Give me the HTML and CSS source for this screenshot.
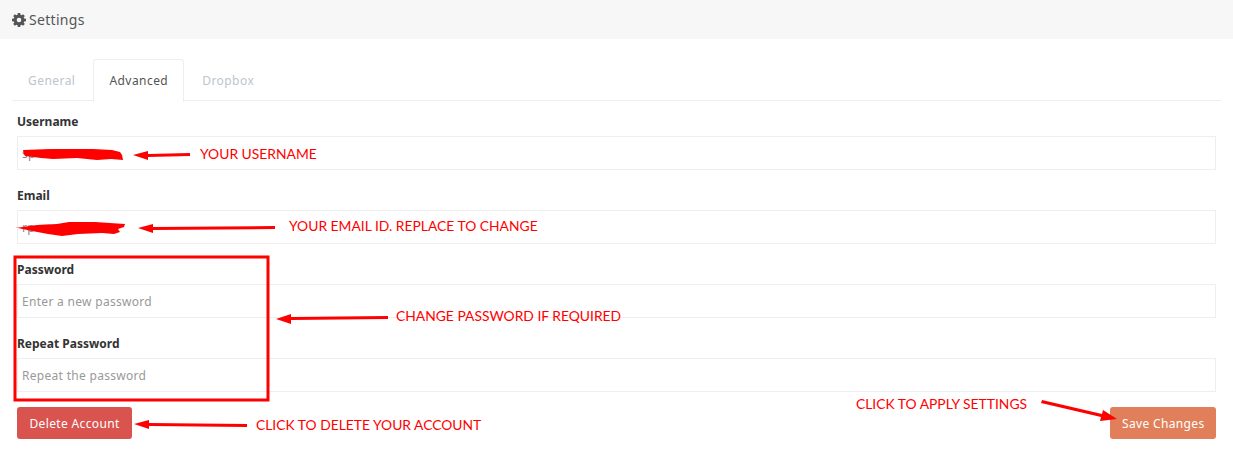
FILE: index.html
```html
<!DOCTYPE html>
<html lang="en">
<head>
  <meta charset="UTF-8">
  <meta name="viewport" content="width=device-width, initial-scale=1.0">
  <title>Settings</title>
  <link rel="stylesheet" href="styles.css">
</head>
<body>
  <div class="page-head">
    <svg class="gear" viewBox="0 0 14 14" width="14" height="14">
      <path fill="#555" fill-rule="evenodd" d="M5.8 0h2.400l.3 1.800 1.100.5 1.500-1.100 1.700 1.700-1.100 1.500.5 1.100 1.800.3v2.400l-1.800.3-.5 1.100 1.100 1.500-1.700 1.700-1.500-1.100-1.100.5-.3 1.800H5.800l-.3-1.800-1.100-.5-1.500 1.100-1.700-1.700 1.100-1.500-.5-1.100L0 8.200V5.800l1.800-.3.5-1.100-1.100-1.500 1.700-1.700 1.500 1.100 1.100-.5zM7 4.700a2.300 2.300 0 1 0 0 4.600 2.300 2.300 0 0 0 0-4.600z"/>
    </svg>
    <span>Settings</span>
  </div>

  <div class="content">
    <div class="tabs">
      <a class="tab">General</a>
      <a class="tab active">Advanced</a>
      <a class="tab">Dropbox</a>
    </div>

    <form class="settings-form">
      <label for="username">Username</label>
      <input type="text" id="username" value="sp">

      <label for="email">Email</label>
      <input type="text" id="email" value="rp">

      <label for="password">Password</label>
      <input type="password" id="password" placeholder="Enter a new password">

      <label for="repeat">Repeat Password</label>
      <input type="password" id="repeat" placeholder="Repeat the password">

      <div class="actions">
        <button type="button" class="btn btn-delete">Delete Account</button>
        <button type="button" class="btn btn-save">Save Changes</button>
      </div>
    </form>
  </div>

  <!-- Red annotations drawn over the screenshot -->
  <div class="notes">
    <svg class="notes-draw" width="1233" height="460" viewBox="0 0 1233 460">
      <path fill="#f00" d="M23 150l30-1 40 0 19 1 8 2 2 3 1 5-12-1-14 1-20-2-24 1-12-1-16-2-1-2z"/>
      <path fill="#f00" d="M15 228l22-3 20-1 12-2 26 0 30 2-1 3-6 2 2 3-6 2-12-1-24 1-16 2-14-2-16-3-14-3z"/>

      <path fill="#f00" d="M133 155l15-4 0 3 42-1 0 3-42 1 0 3z"/>
      <path fill="#f00" d="M138 228l15-4 0 3 122-1 0 3-122 1 0 3z"/>
      <path fill="#f00" d="M276 319l15-5 0 3 97-1 0 3-97 1 0 4z"/>
      <path fill="#f00" d="M134 424l15-4 0 3 98 1 0 3-98-1 0 3z"/>
      <path fill="#f00" d="M1041 403l1-3 60 14 1-4 14 9-17 2 1-4z"/>

      <rect x="15" y="257" width="253" height="143" fill="none" stroke="#f00" stroke-width="3"/>
    </svg>
    <span class="note note-user">YOUR USERNAME</span>
    <span class="note note-email">YOUR EMAIL ID. REPLACE TO CHANGE</span>
    <span class="note note-pass">CHANGE PASSWORD IF REQUIRED</span>
    <span class="note note-delete">CLICK TO DELETE YOUR ACCOUNT</span>
    <span class="note note-apply">CLICK TO APPLY SETTINGS</span>
  </div>
</body>
</html>
```

FILE: styles.css
```css
body {
  font-family: 'Noto Sans', 'Open Sans', sans-serif;
  font-size: 12px;
  letter-spacing: 0.3px;
  color: #333;
  background-color: #fff;
  margin: 0;
  height: 460px;
  overflow: hidden;
  position: relative;
}
.page-head {
  height: 39px;
  background-color: #f7f7f7;
  padding-left: 12px;
  display: flex;
  align-items: center;
  gap: 3px;
  font-size: 14px;
  color: #555;
}
.content {
  padding: 20px 12px 0;
}
.tabs {
  display: flex;
  height: 41px;
  border-bottom: 1px solid #eee;
}
.tab {
  padding: 0 15px;
  margin-right: 2px;
  line-height: 41px;
  height: 41px;
  color: #bcc5cc;
  letter-spacing: 0.45px;
  border: 1px solid transparent;
  border-bottom: none;
}
.tab.active {
  color: #555;
  background-color: #fff;
  border-color: #eee;
  height: 42px;
  border-radius: 3px 3px 0 0;
}
.settings-form {
  padding: 11px 5px 0;
}
label {
  display: block;
  font-weight: 700;
  line-height: 20px;
  height: 20px;
  margin-bottom: 4px;
  color: #333;
  letter-spacing: 0;
}
input {
  display: block;
  box-sizing: border-box;
  width: 100%;
  height: 34px;
  padding: 0 4px;
  margin-bottom: 16px;
  border: 1px solid #eee;
  background-color: #fff;
  font-family: inherit;
  font-size: 12px;
  letter-spacing: 0.3px;
  color: #888;
  outline: none;
}
input::placeholder {
  color: #999;
  opacity: 1;
}
.actions {
  display: flex;
  justify-content: space-between;
  margin-top: -1px;
}
.btn {
  height: 32px;
  padding: 0 12px;
  border: none;
  border-radius: 3px;
  color: #fff;
  font-family: inherit;
  font-size: 12px;
  letter-spacing: 0.35px;
  cursor: pointer;
}
.btn-delete {
  padding: 0 12.5px;
  background-color: #d9534f;
}
.btn-save {
  padding: 0 11.5px;
  background-color: #e07f5a;
}
/* annotations */
.notes {
  position: absolute;
  top: 0;
  left: 0;
  width: 1233px;
  height: 460px;
  pointer-events: none;
}
.notes-draw {
  display: block;
}
.note {
  position: absolute;
  font-family: 'Lato', sans-serif;
  font-size: 13.85px;
  letter-spacing: 0;
  line-height: 16px;
  color: #f00;
  white-space: nowrap;
}
.note-user { left: 200px; top: 146px; }
.note-email { left: 289px; top: 218px; }
.note-pass { left: 396px; top: 308px; }
.note-delete { left: 256px; top: 417px; }
.note-apply { left: 856px; top: 396px; }
```
